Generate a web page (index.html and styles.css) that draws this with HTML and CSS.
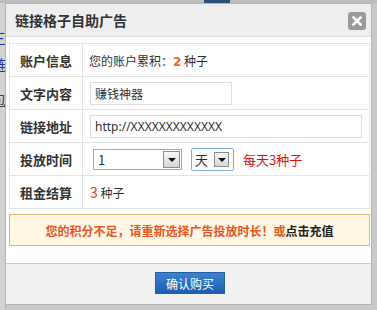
FILE: index.html
```html
<!DOCTYPE html>
<html lang="zh-CN">
<head>
    <meta charset="UTF-8">
    <title>链接格子自助广告</title>
    <link rel="stylesheet" href="styles.css">
</head>
<body>
    <div class="page">
        <div class="topbar">
            <span class="tab"></span>
        </div>
        <div class="side">
            <span class="s-blue s1">三</span>
            <span class="s-blue s2">链</span>
            <span class="s-dark s3">包</span>
            <span class="s-red s4">7</span>
        </div>
    </div>

    <div class="dialog">
        <div class="dlg-head">
            <h3>链接格子自助广告</h3>
            <a class="close" href="#">
                <svg width="18" height="18" viewBox="0 0 18 18"><path d="M5.5 5.5 L12.5 12.5 M12.5 5.5 L5.5 12.5" stroke="#fff" stroke-width="2.6" stroke-linecap="square"/></svg>
            </a>
        </div>
        <div class="dlg-body">
            <table class="form">
                <tr>
                    <th>账户信息</th>
                    <td>您的账户累积：<b class="num">2</b> 种子</td>
                </tr>
                <tr>
                    <th>文字内容</th>
                    <td><input class="txt short" type="text" value="赚钱神器"></td>
                </tr>
                <tr>
                    <th>链接地址</th>
                    <td><input class="txt long" type="text" value="http://XXXXXXXXXXXXX"></td>
                </tr>
                <tr>
                    <th>投放时间</th>
                    <td>
                        <div class="time">
                            <span class="sel sel-num">1<i class="arrow"></i></span>
                            <span class="sel sel-unit">天<i class="arrow"></i></span>
                            <span class="per-day">每天3种子</span>
                        </div>
                    </td>
                </tr>
                <tr>
                    <th>租金结算</th>
                    <td><span class="cost">3</span> 种子</td>
                </tr>
            </table>
            <div class="notice">您的积分不足，请重新选择广告投放时长！或<a href="#">点击充值</a></div>
        </div>
        <div class="dlg-foot">
            <button class="buy">确认购买</button>
        </div>
    </div>
</body>
</html>
```

FILE: styles.css
```css
body {
    margin: 0;
    background: #c9c9c9;
    font-family: "Noto Sans CJK SC", sans-serif;
    font-size: 12px;
    color: #333;
    overflow: hidden;
    text-spacing-trim: space-all;
}
.page {
    height: 310px;
}
.topbar {
    height: 3px;
    background: #bdbdbd;
    padding-left: 204px;
}
.tab {
    display: block;
    width: 26px;
    height: 3px;
    background: #2c4f78;
}
.side {
    display: flex;
    flex-direction: column;
    width: 5px;
    height: 307px;
    overflow: hidden;
    background: #d2d2d2;
    border-right: 1px solid #b8b8b8;
}
.side span {
    display: block;
    font-size: 15px;
    line-height: 16px;
    margin-left: -9px;
}
.s-blue { color: #2233aa; }
.s-dark { color: #444; }
.s-red { color: #c8452a; font-weight: bold; }
.s1 { margin-top: 27px; }
.s2 { margin-top: 11px; }
.s3 { margin-top: 19px; }
.s4 { margin-top: 49px; }

.dialog {
    position: absolute;
    left: 5px;
    top: 3px;
    width: 367px;
    height: 302px;
    box-sizing: border-box;
    border: 1px solid #b5b5b5;
    background: #fff;
    display: flex;
    flex-direction: column;
}
.dlg-head {
    height: 32px;
    background: #eeeeee;
    border-bottom: 1px solid #dcdcdc;
    display: flex;
    align-items: center;
    justify-content: space-between;
    padding: 0 5px 0 9px;
}
.dlg-head h3 {
    margin: 0;
    font-size: 14px;
    font-weight: bold;
    color: #333;
    padding-bottom: 1px;
}
.close {
    display: flex;
    width: 18px;
    height: 18px;
    border-radius: 3px;
    background: #9a9a9a;
    margin-top: 1px;
}
.dlg-body {
    flex: 1;
    padding: 6px 1px 0 3px;
}
.form {
    width: 361px;
    border-collapse: collapse;
}
.form th, .form td {
    border: 1px solid #e4e4e4;
    height: 32px;
    padding: 0;
}
.form th {
    width: 72px;
    font-weight: bold;
    font-size: 13px;
    color: #333;
}
.form td {
    padding-left: 6px;
    text-align: left;
}
.num {
    color: #f26a10;
    font-family: "DejaVu Sans", sans-serif;
    font-size: 12px;
}
.txt {
    box-sizing: border-box;
    height: 23px;
    border: 1px solid #dedede;
    padding: 0 4px;
    font-family: "Noto Sans CJK SC", sans-serif;
    font-size: 12px;
    color: #333;
    margin-left: 1px;
    display: block;
}
.short { width: 142px; }
.long {
    width: 272px;
    font-family: "Noto Sans", sans-serif;
    font-size: 12px;
}
.time {
    display: flex;
    align-items: center;
    gap: 9px;
    padding-left: 4px;
}
.sel {
    box-sizing: border-box;
    display: flex;
    align-items: center;
    justify-content: space-between;
    height: 21px;
    border: 1px solid #a7a7a7;
    padding: 0 1px 0 4px;
    font-size: 13px;
    color: #333;
    background: #fff;
}
.sel-num { width: 89px; }
.sel-unit {
    width: 43px;
    height: 23px;
    border-color: #7eaedb;
    padding-left: 3px;
    padding-right: 4px;
    border-radius: 2px;
}
.arrow {
    box-sizing: border-box;
    display: flex;
    align-items: center;
    justify-content: center;
    width: 17px;
    height: 17px;
    border: 1px solid #8d8d8d;
    background: linear-gradient(#f7f7f7, #d6d6d6);
}
.sel-unit .arrow {
    width: 15px;
    height: 15px;
}
.arrow::after {
    content: "";
    border-left: 4px solid transparent;
    border-right: 4px solid transparent;
    border-top: 4px solid #111;
    margin-top: 1px;
}
.per-day {
    color: #e01010;
    font-size: 13px;
}
.cost {
    color: #d8401c;
    font-size: 14px;
    margin-left: 1px;
}
.notice {
    box-sizing: border-box;
    width: 361px;
    height: 32px;
    margin-top: 5px;
    border: 1px solid #f0b070;
    background: #fff6e4;
    color: #e8561e;
    font-weight: bold;
    font-size: 12px;
    display: flex;
    align-items: center;
    justify-content: center;
}
.notice a {
    color: #222;
    text-decoration: none;
}
.dlg-foot {
    height: 41px;
    border-top: 1px solid #cfcfcf;
    background: #f1f1f1;
    display: flex;
    justify-content: center;
    padding-top: 8px;
    box-sizing: border-box;
}
.buy {
    width: 70px;
    height: 22px;
    border: 1px solid #2a5f9e;
    background: linear-gradient(#3a83d0, #1f5eae);
    color: #fff;
    font-family: "Noto Sans CJK SC", sans-serif;
    font-size: 12px;
    padding: 0;
    margin-left: 3px;
}
```
